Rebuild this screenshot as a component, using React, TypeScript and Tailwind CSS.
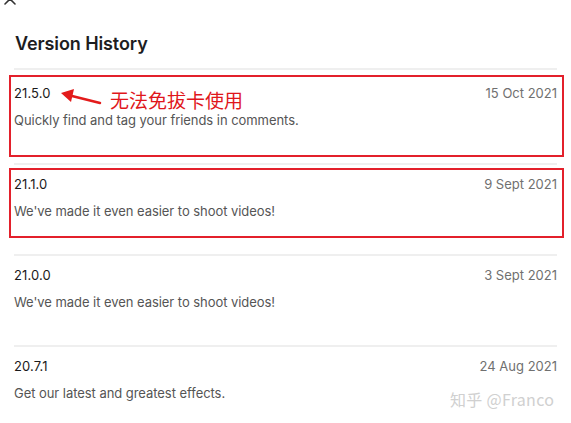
import React from "react";

const items = [
  { v: "21.5.0", d: "15 Oct 2021", t: "Quickly find and tag your friends in comments." },
  { v: "21.1.0", d: "9 Sept 2021", t: "We've made it even easier to shoot videos!" },
  { v: "21.0.0", d: "3 Sept 2021", t: "We've made it even easier to shoot videos!" },
  { v: "20.7.1", d: "24 Aug 2021", t: "Get our latest and greatest effects." },
];

export default function App() {
  return (
    <div className="relative w-[571px] h-[423px] bg-white overflow-hidden font-['Inter','Noto_Sans',sans-serif]">
      <svg className="absolute left-[4px] top-[-7px]" width="12" height="12" viewBox="0 0 12 12">
        <path d="M1 1 L11 11 M11 1 L1 11" stroke="#333" strokeWidth="1.6" strokeLinecap="round" />
      </svg>
      <div className="px-[15px] pt-[32px]">
        <h1 className="text-[18px] leading-[24px] font-semibold text-[#1d1d1f] tracking-[-0.1px]">Version History</h1>
      </div>
      <div className="mt-[12px] px-[14px]">
        {items.map((it, i) => (
          <div
            key={it.v}
            className={
              "border-t-2 border-[#efefef] " +
              (i === 0 ? "pt-[15px] h-[95px]" : "pt-[11px] h-[91px]")
            }
          >
            <div className="flex justify-between items-center h-[18px]">
              <span className="text-[13px] font-normal text-[#1a1a1a] tracking-[0.1px]">{it.v}</span>
              <span className="text-[13px] text-[#707070]">{it.d}</span>
            </div>
            <div className="mt-[9px] h-[18px] flex items-center text-[13px] text-[#555] tracking-[-0.05px]">{it.t}</div>
          </div>
        ))}
      </div>

      <div className="absolute left-[9px] top-[75px] w-[555px] h-[82px] border-2 border-[#e3202b]" />
      <div className="absolute left-[9px] top-[168px] w-[555px] h-[70px] border-2 border-[#e3202b]" />

      <svg className="absolute left-0 top-0" width="120" height="120" viewBox="0 0 120 120">
        <path d="M100 103 L72 96" stroke="#e31b1b" strokeWidth="2.5" strokeLinecap="round" />
        <path d="M61 93 L74 89 L71 102 Z" fill="#e31b1b" />
      </svg>
      <div className="absolute left-[110px] top-[87px] text-[19px] leading-[26px] text-[#e0161b] font-['Noto_Sans_CJK_SC',sans-serif]">
        无法免拔卡使用
      </div>

      <div className="absolute left-[450px] top-[389px] text-[16px] leading-[20px] tracking-[0.3px] text-[#d0d0d0] font-['Noto_Sans_CJK_SC',sans-serif]">
        知乎 @Franco
      </div>
    </div>
  );
}
